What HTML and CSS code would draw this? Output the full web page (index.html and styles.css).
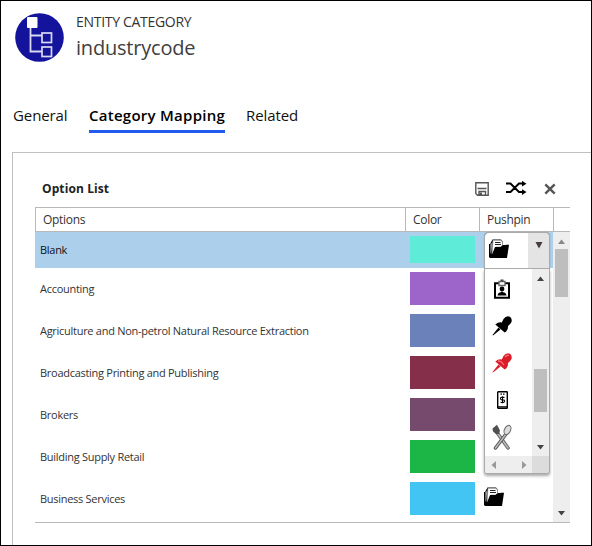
FILE: index.html
```html
<!DOCTYPE html>
<html lang="en">
<head>
<meta charset="utf-8">
<title>industrycode</title>
<link rel="stylesheet" href="styles.css">
</head>
<body>
<svg width="0" height="0" class="defs">
  <symbol id="folder" viewBox="0 0 20 20">
    <path d="M0 18V5h1l2.500-4.500H12L14 3v3h2.500v13H1z" fill="#000"/>
    <path d="M1.300 4.500l2-.5L2.500 12 1.300 15z" fill="#999"/>
    <path d="M3 15L4 1.300h8L13.500 3v5H7z" fill="#fff" stroke="#999" stroke-width=".7"/>
    <path d="M6 3.500h5.500M6 5.500h6" stroke="#222" stroke-width="1"/>
    <path d="M6 8h5.500l1.500-1.500h3l.8-.8H20L18 19H2z" fill="#000"/>
  </symbol>
  <symbol id="pin" viewBox="0 0 20 20">
    <path d="M6.500 11.500l2 2L1 19.500l-.5-.5z" class="needle"/>
    <path d="M11.500 3Q14-.3 17 .5T19.700 5.500q-.7 2-3.700 4.500.3 4.300-3.300 6.500L3.300 8.500Q6.500 5.700 9.800 6.500z"/>
  </symbol>
</svg>
<div class="window">
  <header class="heading">
    <svg class="logo" width="49" height="49" viewBox="0 0 49 49">
      <circle cx="24.500" cy="24.500" r="24.300" fill="#13139b"/>
      <path d="M15.500 13.500v25H27M15.500 22.500H27" fill="none" stroke="#d9d9f2" stroke-width="1.800"/>
      <rect x="12" y="4" width="10.500" height="11" rx="1" fill="#fff"/>
      <g fill="#13139b" stroke="#d9d9f2" stroke-width="1.700"><rect x="27" y="20" width="9.500" height="9.500"/><rect x="27" y="34" width="9.500" height="9.500"/></g>
    </svg>
    <div>
      <div class="entity">ENTITY CATEGORY</div>
      <div class="name">industrycode</div>
    </div>
  </header>
  <nav class="tabs">
    <span class="tab general">General</span>
    <span class="tab active">Category Mapping</span>
    <span class="tab related">Related</span>
  </nav>
  <main class="panel">
    <div class="toolbar">
      <h2>Option List</h2>
      <svg class="save" width="14" height="14" viewBox="0 0 14 14"><path d="M.8.8h12.400v12.400H2.500L.8 11.500zM2.500 6.500h9M4 13V9.500h6.500V13" fill="none" stroke="#555" stroke-width="1.400"/><path d="M4.500 10.500h2.500V13H4.500z" fill="#555"/></svg>
      <svg class="shuffle" width="21" height="14" viewBox="0 0 21 14"><path d="M0 2.500h4.500L13 11h4M0 11h4.500L13 2.500h4" fill="none" stroke="#000" stroke-width="2"/><path d="M16-.2l4.500 2.900L16 5.600zM16 8.200l4.500 2.900L16 14z"/></svg>
      <svg class="close" width="12" height="12" viewBox="0 0 12 12"><path d="M1.300 1.300l9.400 9.400M10.700 1.300l-9.400 9.400" stroke="#555" stroke-width="2.400"/></svg>
    </div>
    <section class="grid">
      <div class="head"><span>Options</span><span>Color</span><span>Pushpin</span><span></span></div>
      <div class="body">
        <div class="rows">
          <div class="row selected"><span>Blank</span><i class="swatch aqua"></i></div>
          <div class="row"><span>Accounting</span><i class="swatch violet"></i></div>
          <div class="row"><span>Agriculture and Non-petrol Natural Resource Extraction</span><i class="swatch blue"></i></div>
          <div class="row"><span>Broadcasting Printing and Publishing</span><i class="swatch maroon"></i></div>
          <div class="row"><span>Brokers</span><i class="swatch plum"></i></div>
          <div class="row"><span>Building Supply Retail</span><i class="swatch green"></i></div>
          <div class="row"><span>Business Services</span><i class="swatch sky"></i><svg class="folder" width="20" height="20"><use href="#folder"/></svg></div>
        </div>
        <div class="scroll">
          <svg width="9" height="5" viewBox="0 0 9 5"><path d="M1 5l3.500-4.500L8 5z" fill="#888"/></svg>
          <div class="thumb"></div>
          <svg class="last" width="9" height="5" viewBox="0 0 9 5"><path d="M1 0l3.500 4.500L8 0z" fill="#444"/></svg>
        </div>
        <div class="dropdown">
          <div class="combo">
            <svg width="20" height="20"><use href="#folder"/></svg>
            <div class="arrow"><svg width="8" height="7" viewBox="0 0 8 7"><path d="M.5 0h7L4 6.500z" fill="#443c3c"/></svg></div>
          </div>
          <div class="list">
            <div class="icons">
              <svg class="badge" width="16" height="20" viewBox="0 0 16 20"><path d="M1 4.200h14v14.600H1z" fill="#fff" stroke="#000" stroke-width="2"/><path d="M5 2.500h6v4H5z" fill="#fff" stroke="#666" stroke-width="1.400"/><path d="M6.500.5h3v2h-3z" fill="#444"/><circle cx="8" cy="10" r="2.400"/><path d="M3.500 16.500q.3-3 3.500-3.200l1-1 1 1q3.200.2 3.500 3.200z"/></svg>
              <svg class="black" width="20" height="20"><use href="#pin"/></svg>
              <svg class="red" width="20" height="20"><use href="#pin"/><path d="M13 4q2-2.500 4-1.500M6 8l3 .5 3 3.500" fill="none" stroke="#ff6a70" stroke-width="1.300"/></svg>
              <svg class="phone" width="11" height="18" viewBox="0 0 11 18"><rect x=".7" y=".7" width="9.600" height="16.600" rx=".6" fill="#fff" stroke="#000" stroke-width="1.400"/><path d="M3.500 3.200h1.500M6 3.200h1.500M1 15.800h9" stroke="#000" stroke-width="1.300"/><path d="M7.500 6.500q-4-1-4 .8t2 1.500 2 1.500-4 .9M5.500 5.300v7" fill="none" stroke="#000" stroke-width="1.100"/></svg>
              <svg class="utensils" width="20" height="26" viewBox="0 0 20 26"><path d="M5 8.500L16 24" stroke="#666" stroke-width="3.500" stroke-linecap="round"/><path d="M5 8.500L16 24" stroke="#bbb" stroke-width="1.500" stroke-linecap="round"/><path d="M.5 4.500L5 .8 8 6.500 7 10 4 10 1 7.500z" fill="#505050"/><path d="M14 10L3.500 24" stroke="#555" stroke-width="3.500" stroke-linecap="round"/><path d="M14 10L3.500 24" stroke="#bbb" stroke-width="1.500" stroke-linecap="round"/><ellipse cx="15.500" cy="6" rx="3" ry="4.900" transform="rotate(25 15.500 6)" fill="#ddd" stroke="#777" stroke-width="1.200"/></svg>
            </div>
            <div class="vscroll">
              <svg width="9" height="5" viewBox="0 0 9 5"><path d="M1 5l3.500-4.500L8 5z" fill="#444"/></svg>
              <div class="thumb"></div>
              <svg class="last" width="9" height="5" viewBox="0 0 9 5"><path d="M1 0l3.500 4.500L8 0z" fill="#444"/></svg>
            </div>
            <div class="hscroll"><svg width="5" height="8" viewBox="0 0 5 8"><path d="M5 0v8L.5 4z" fill="#999"/></svg><svg width="5" height="8" viewBox="0 0 5 8"><path d="M0 0v8l4.500-4z" fill="#999"/></svg></div>
            <div class="corner"></div>
          </div>
        </div>
      </div>
    </section>
  </main>
</div>
</body>
</html>
```
FILE: styles.css
```css
* { box-sizing: border-box; }
body { margin: 0; font-family: "Open Sans", "Noto Sans", sans-serif; color: #333; background: #fff; }
svg { display: block; flex: none; }
.defs { position: absolute; }
.window { width: 592px; height: 546px; border: 1px solid #000; overflow: hidden; }

.heading { display: flex; height: 93px; padding: 11px 0 0 14px; }
.logo { margin: 1px 12px 0 0; }
.entity { font-size: 14px; line-height: 20px; letter-spacing: -.3px; }
.name { font-size: 20px; line-height: 28px; margin-top: 2px; letter-spacing: -.2px; color: #404040; }

.tabs { display: flex; height: 58px; padding: 9px 0 0 12px; font-size: 15px; color: #111; }
.tab { height: 30px; line-height: 24px; white-space: nowrap; letter-spacing: -.1px; }
.general { width: 54px; }
.active { width: 136px; margin: 0 21px 0 22px; border-bottom: 3px solid #215bee; font-weight: 600; letter-spacing: .26px; color: #000; }

.panel { margin-left: 11px; height: 400px; border: 1px solid #c0c0c0; border-width: 1px 0 0 1px; padding-left: 22px; }
.toolbar { display: flex; height: 54px; padding: 26px 0 0 7px; }
h2 { margin: 0; width: 433px; font-size: 12px; font-weight: 700; line-height: 19px; letter-spacing: .1px; color: #222; }
.save { margin: 3px 17px 0 0; }
.shuffle { margin: 2px 17px 0 0; }
.close { margin-top: 4px; }

.grid { width: 535px; height: 316px; border-bottom: 1px solid #b8b8b8; }
.head { display: grid; grid-template-columns: 370px 74px 74px 17px; height: 25px; border-top: 1px solid #b8b8b8; border-bottom: 1px solid #b8b8b8; font-size: 12px; line-height: 23px; letter-spacing: -.3px; }
.head span { border-left: 1px solid #b8b8b8; padding-left: 7px; }
.body { position: relative; display: flex; }
.rows { width: 518px; }
.row { display: grid; grid-template-columns: 375px 74px 1fr; align-items: center; height: 42px; padding-bottom: 1px; font-size: 11px; line-height: 15px; letter-spacing: -.28px; }
.row span { padding-left: 5px; }
.row.selected { height: 36px; background: #acd0ec; color: #111; }
.swatch { width: 65px; height: 33px; }
.selected .swatch { height: 27px; }
.aqua { background: #5eebd8; }
.violet { background: #9d65c9; }
.blue { background: #6b81b9; }
.maroon { background: #862f4b; }
.plum { background: #764a6d; }
.green { background: #1bb646; }
.sky { background: #43c5f4; }
.folder { margin-bottom: 3px; }

.scroll, .vscroll { display: flex; flex-direction: column; align-items: center; width: 17px; background: #eee; }
.scroll { height: 290px; padding: 7px 0 6px; }
.thumb { width: 13px; background: #bebebe; }
.scroll .thumb { height: 48px; margin-top: 5px; }
.last { margin-top: auto; }

.dropdown { position: absolute; left: 449px; top: 0; width: 66px; }
.combo { display: flex; height: 37px; padding: 6px 0 0 4px; border: 1px solid #aaa; border-radius: 5px 5px 0 0; background: #fff; box-shadow: 0 0 1px #777; }
.arrow { display: flex; justify-content: center; width: 21px; height: 35px; margin: -6px 0 0 auto; padding-top: 9px; border-radius: 0 4px 0 0; background: #e4e4e4; }
.list { display: grid; grid-template: 187px 17px / 47px 17px; border: 1px solid #aaa; border-top: 0; border-radius: 0 0 3px 3px; background: #fff; box-shadow: 0 2px 3px #aaa; overflow: hidden; }
.icons { padding: 10px 0 0 7px; }
.badge { margin-left: 2px; }
.black { margin-top: 17px; }
.black .needle { fill: #555; }
.red { margin-top: 17px; fill: #d91c28; }
.phone { margin: 18px 0 0 5px; }
.utensils { margin-top: 15px; }
.vscroll { padding: 7px 0 6px; }
.vscroll .thumb { height: 43px; margin-top: 88px; }
.hscroll { display: flex; justify-content: space-between; align-items: center; padding: 0 5px 0 6px; background: #eee; }
.corner { background: #dcdcdc; }
```
